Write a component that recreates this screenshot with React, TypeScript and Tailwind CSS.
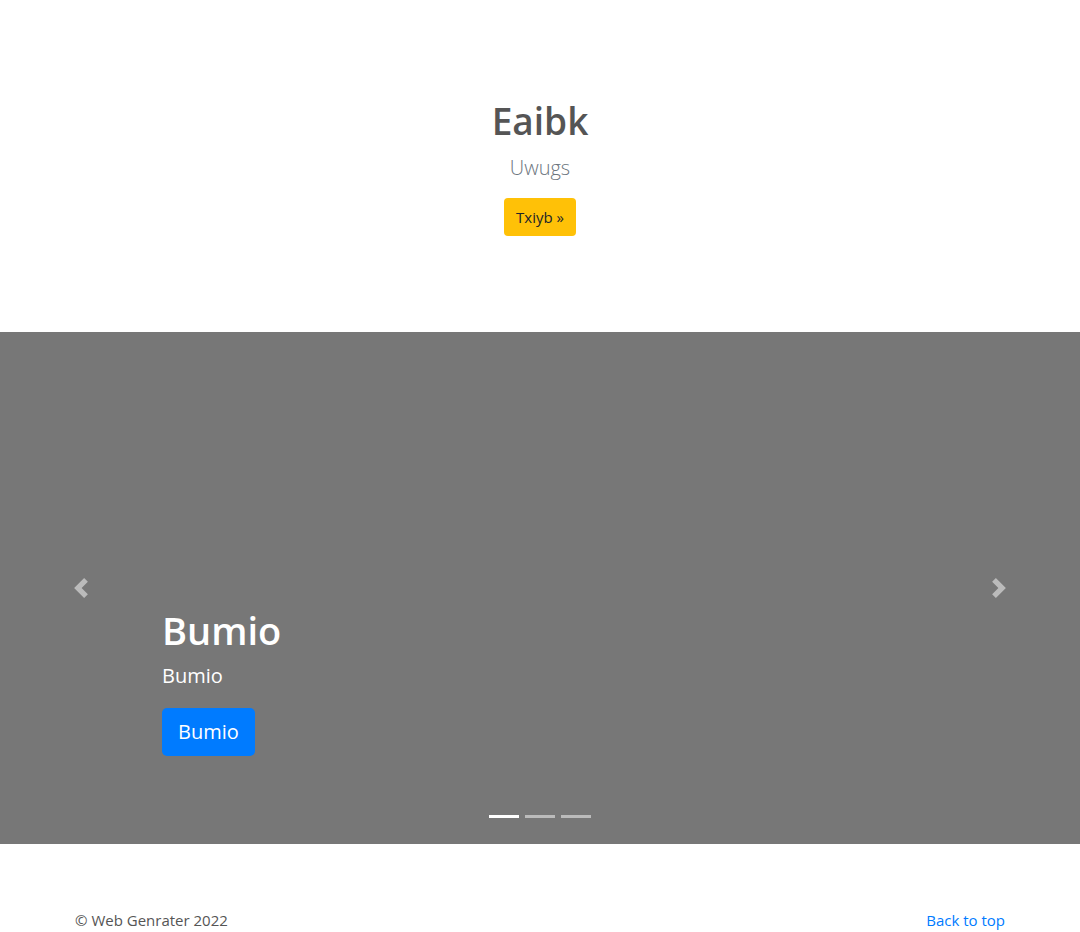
import React from "react";

export default function App() {
  const font = { fontFamily: '"Open Sans", "Noto Sans", Arial, sans-serif' };
  return (
    <div className="min-h-[932px] bg-white text-[#212529]" style={font}>
      <section className="flex flex-col items-center pt-[97px] pb-[96px] text-center">
        <h1 className="mb-2 text-[37px] font-semibold leading-[48px] text-[#555]">Eaibk</h1>
        <p className="mb-[15px] text-[20px] font-light leading-[30px] text-[#6c757d]">Uwugs</p>
        <button className="h-[38px] rounded-[4px] bg-[#ffc107] px-3 text-[15px] leading-[38px] text-[#212529]">
          Txiyb »
        </button>
      </section>

      <section className="relative flex h-[512px] bg-[#777]">
        <div className="flex w-[15%] items-center justify-center opacity-50">
          <svg width="20" height="20" viewBox="0 0 8 8" fill="#fff">
            <path d="M5.25 0l-4 4 4 4 1.5-1.5L4.25 4l2.5-2.5L5.25 0z" />
          </svg>
        </div>
        <div className="flex flex-1 flex-col justify-end pb-[88px] text-white">
          <h1 className="mb-2 text-[38px] font-semibold leading-[48px]">Bumio</h1>
          <p className="mb-[18px] text-[20px] leading-[28px]">Bumio</p>
          <div>
            <button className="h-[48px] rounded-[5px] bg-[#007bff] px-4 text-[20px] leading-[48px] text-white">
              Bumio
            </button>
          </div>
        </div>
        <div className="flex w-[15%] items-center justify-center opacity-50">
          <svg width="20" height="20" viewBox="0 0 8 8" fill="#fff">
            <path d="M2.75 0l-1.5 1.5L3.75 4l-2.5 2.5L2.75 8l4-4-4-4z" />
          </svg>
        </div>
        <div className="absolute bottom-[26px] left-0 right-0 flex justify-center gap-[6px]">
          <span className="h-[3px] w-[30px] bg-white" />
          <span className="h-[3px] w-[30px] bg-white opacity-50" />
          <span className="h-[3px] w-[30px] bg-white opacity-50" />
        </div>
      </section>

      <footer className="mx-auto flex max-w-[960px] justify-between px-[15px] pt-[64px] pb-[12px] text-[15px] leading-[24px] text-[#555]">
        <p>© Web Genrater 2022</p>
        <a href="#" className="text-[#007bff]">Back to top</a>
      </footer>
    </div>
  );
}
